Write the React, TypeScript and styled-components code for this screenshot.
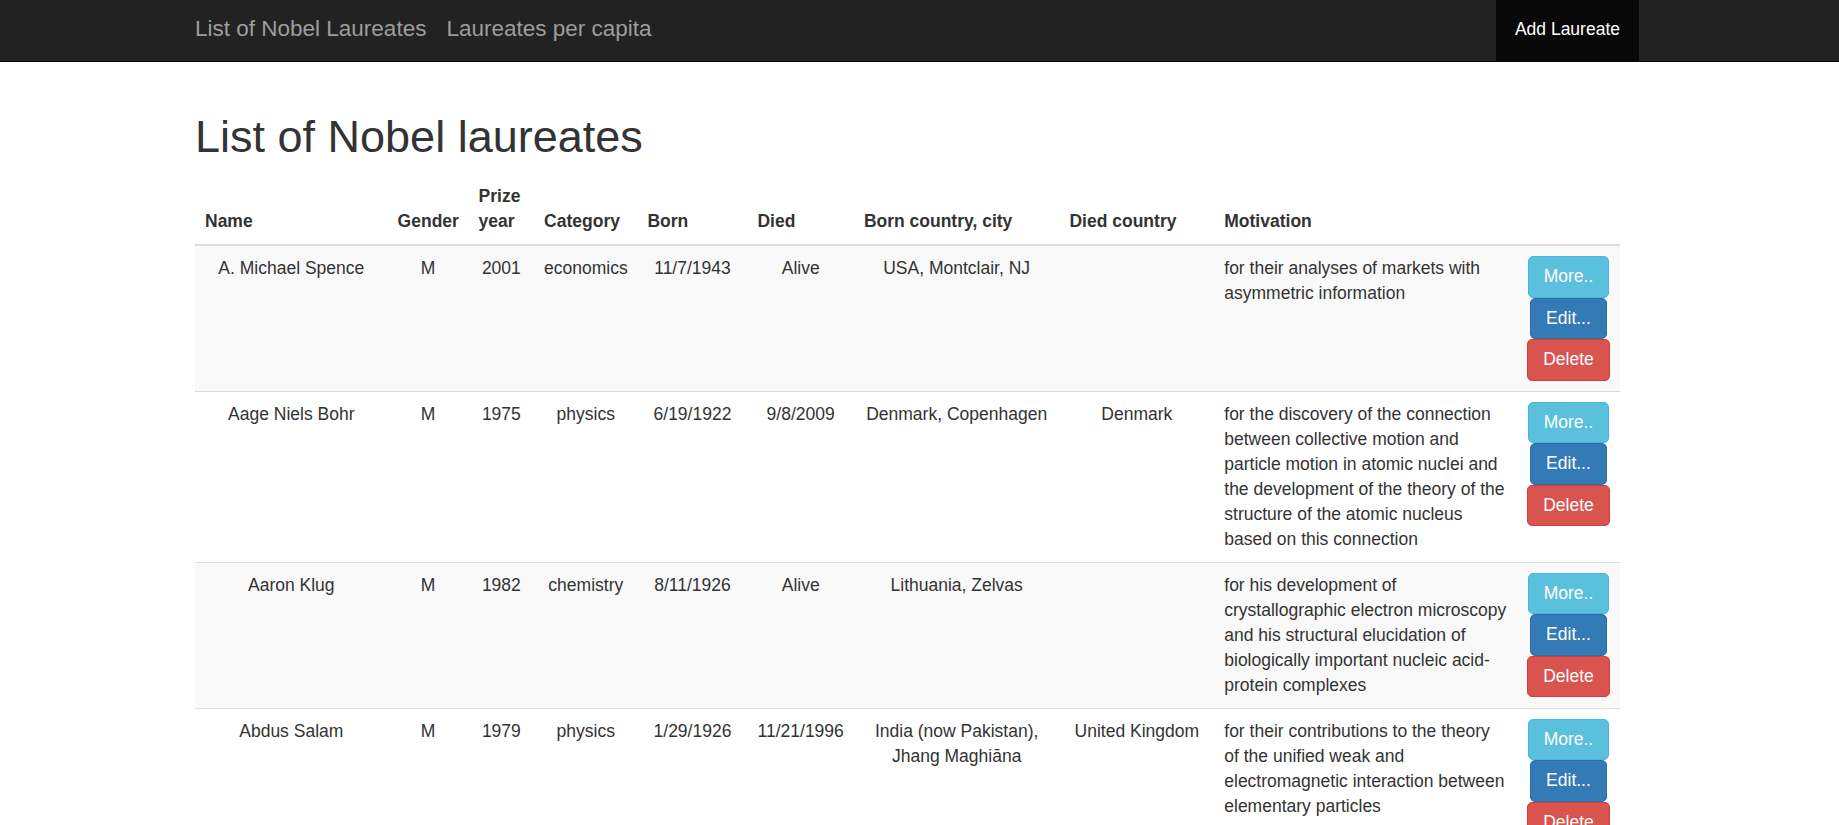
import React from "react";
import styled, { createGlobalStyle } from "styled-components";

const GlobalStyle = createGlobalStyle`
  html { scrollbar-width: none; }
  html::-webkit-scrollbar { display: none; }
  body {
    margin: 0;
    background: #fff;
    color: #333;
    font-family: "Liberation Sans", Arial, Helvetica, sans-serif;
    font-size: 17.5px;
    line-height: 25px;
  }
  * { box-sizing: border-box; }
`;

const Navbar = styled.nav`
  background: #222;
  border-bottom: 1px solid #080808;
  height: 62px;
  margin-bottom: 25px;
`;

const NavInner = styled.div`
  width: 1425px;
  margin-left: 195px;
  height: 61px;
  display: flex;
  align-items: stretch;
  justify-content: space-between;
`;

const Brands = styled.div`
  display: flex;
  align-items: center;
  gap: 20px;
  padding-bottom: 4px;
`;

const Brand = styled.a`
  color: #9d9d9d;
  font-size: 22.5px;
  line-height: 25px;
  text-decoration: none;
  cursor: pointer;
`;

const NavRight = styled.a<{ $active?: boolean }>`
  display: flex;
  align-items: center;
  padding: 0 18.75px 3px;
  margin-right: -18.75px;
  background: ${(p) => (p.$active ? "#080808" : "transparent")};
  color: #fff;
  font-size: 17.5px;
  text-decoration: none;
`;

const Container = styled.main`
  display: flow-root;
  width: 1425px;
  margin-left: 195px;
`;

const Title = styled.h1`
  font-size: 45px;
  font-weight: 500;
  line-height: 49.5px;
  margin: 25px 0 12.5px;
  color: #333;
`;

const Table = styled.table`
  width: 1425px;
  table-layout: fixed;
  border-collapse: collapse;
  border-spacing: 0;
`;

const Th = styled.th`
  text-align: left;
  vertical-align: bottom;
  padding: 10px;
  font-weight: bold;
  border-bottom: 2.5px solid #ddd;
`;

const Row = styled.tr<{ $striped: boolean }>`
  background: ${(p) => (p.$striped ? "#f9f9f9" : "#fff")};
`;

const Td = styled.td<{ $left?: boolean }>`
  vertical-align: top;
  padding: 10px;
  border-top: 1.25px solid #ddd;
  text-align: ${(p) => (p.$left ? "left" : "center")};
`;

const Actions = styled.div`
  display: flex;
  flex-direction: column;
  align-items: center;
`;

const variants = {
  info: { bg: "#5bc0de", border: "#46b8da" },
  primary: { bg: "#337ab7", border: "#2e6da4" },
  danger: { bg: "#d9534f", border: "#d43f3a" },
};

const Button = styled.button<{ $variant: keyof typeof variants }>`
  font-family: inherit;
  font-size: 17.5px;
  line-height: 25px;
  padding: 7.25px 15px;
  border-radius: 5px;
  color: #fff;
  background: ${(p) => variants[p.$variant].bg};
  border: 1.25px solid ${(p) => variants[p.$variant].border};
  cursor: pointer;
  white-space: nowrap;
`;

type Laureate = {
  name: string;
  gender: string;
  year: string;
  category: string;
  born: string;
  died: string;
  bornPlace: string;
  diedCountry: string;
  motivation: string;
};

const data: Laureate[] = [
  {
    name: "A. Michael Spence",
    gender: "M",
    year: "2001",
    category: "economics",
    born: "11/7/1943",
    died: "Alive",
    bornPlace: "USA, Montclair, NJ",
    diedCountry: "",
    motivation: "for their analyses of markets with asymmetric information",
  },
  {
    name: "Aage Niels Bohr",
    gender: "M",
    year: "1975",
    category: "physics",
    born: "6/19/1922",
    died: "9/8/2009",
    bornPlace: "Denmark, Copenhagen",
    diedCountry: "Denmark",
    motivation:
      "for the discovery of the connection between collective motion and particle motion in atomic nuclei and the development of the theory of the structure of the atomic nucleus based on this connection",
  },
  {
    name: "Aaron Klug",
    gender: "M",
    year: "1982",
    category: "chemistry",
    born: "8/11/1926",
    died: "Alive",
    bornPlace: "Lithuania, Zelvas",
    diedCountry: "",
    motivation:
      "for his development of crystallographic electron microscopy and his structural elucidation of biologically important nucleic acid-protein complexes",
  },
  {
    name: "Abdus Salam",
    gender: "M",
    year: "1979",
    category: "physics",
    born: "1/29/1926",
    died: "11/21/1996",
    bornPlace: "India (now Pakistan), Jhang Maghiāna",
    diedCountry: "United Kingdom",
    motivation:
      "for their contributions to the theory of the unified weak and electromagnetic interaction between elementary particles",
  },
];

const widths = [192.6, 81, 65.5, 103.4, 110, 106.4, 205.6, 154.8, 302.7, 103];
const headers = [
  "Name",
  "Gender",
  "Prize year",
  "Category",
  "Born",
  "Died",
  "Born country, city",
  "Died country",
  "Motivation",
  "",
];

export default function App() {
  return (
    <>
      <GlobalStyle />
      <Navbar>
        <NavInner>
          <Brands>
            <Brand>List of Nobel Laureates</Brand>
            <Brand>Laureates per capita</Brand>
          </Brands>
          <NavRight $active>Add Laureate</NavRight>
        </NavInner>
      </Navbar>
      <Container>
        <Title>List of Nobel laureates</Title>
        <Table>
          <colgroup>
            {widths.map((w, i) => (
              <col key={i} style={{ width: `${w}px` }} />
            ))}
          </colgroup>
          <thead>
            <tr>
              {headers.map((h, i) => (
                <Th key={i}>{h}</Th>
              ))}
            </tr>
          </thead>
          <tbody>
            {data.map((l, i) => (
              <Row key={l.name} $striped={i % 2 === 0}>
                <Td>{l.name}</Td>
                <Td>{l.gender}</Td>
                <Td>{l.year}</Td>
                <Td>{l.category}</Td>
                <Td>{l.born}</Td>
                <Td>{l.died}</Td>
                <Td>{l.bornPlace}</Td>
                <Td>{l.diedCountry}</Td>
                <Td $left>{l.motivation}</Td>
                <Td>
                  <Actions>
                    <Button $variant="info">More..</Button>
                    <Button $variant="primary">Edit...</Button>
                    <Button $variant="danger">Delete</Button>
                  </Actions>
                </Td>
              </Row>
            ))}
          </tbody>
        </Table>
      </Container>
    </>
  );
}
